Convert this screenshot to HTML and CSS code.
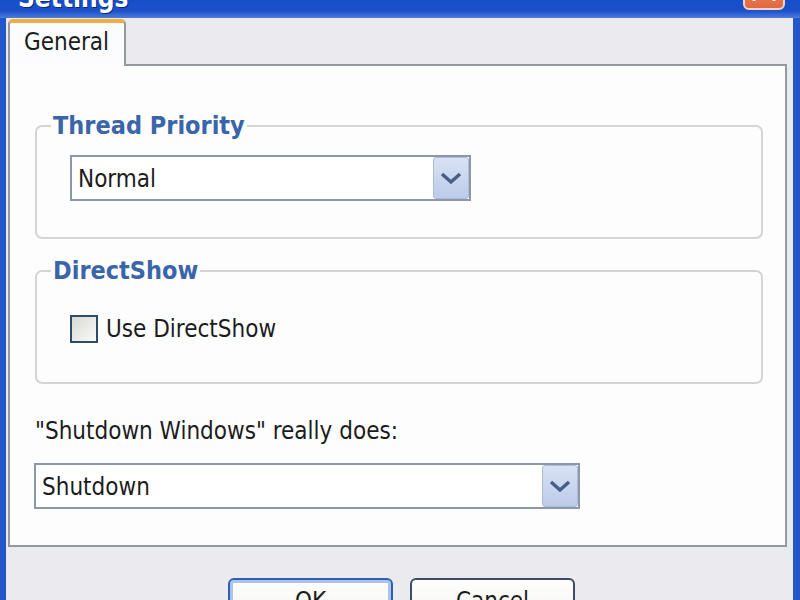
FILE: index.html
```html
<!DOCTYPE html>
<html lang="en">
<head>
    <meta charset="UTF-8">
    <title>Settings</title>
    <link rel="stylesheet" href="styles.css">
</head>
<body>
    <div class="titlebar">
        <span class="title">Settings</span>
        <span class="close">
            <svg width="38" height="38" viewBox="0 0 38 38">
                <path d="M9 9 L29 29 M29 9 L9 29" stroke="#fff" stroke-width="4" stroke-linecap="round"/>
            </svg>
        </span>
    </div>

    <div class="frame">
        <div class="tabs">
            <div class="tab active">General</div>
        </div>

        <div class="panel">
            <fieldset class="group group-priority">
                <legend>Thread Priority</legend>
                <div class="combo combo-short">
                    <span class="combo-text">Normal</span>
                    <span class="combo-btn">
                        <svg width="34" height="40" viewBox="0 0 34 40">
                            <path d="M8 16 L17 24 L26 16" fill="none" stroke="#4a5e84" stroke-width="3.5"/>
                        </svg>
                    </span>
                </div>
            </fieldset>

            <fieldset class="group group-ds">
                <legend>DirectShow</legend>
                <label class="check"><span class="box"></span>Use DirectShow</label>
            </fieldset>

            <div class="field-label">&quot;Shutdown Windows&quot; really does:</div>
            <div class="combo combo-wide">
                <span class="combo-text">Shutdown</span>
                <span class="combo-btn">
                    <svg width="34" height="40" viewBox="0 0 34 40">
                        <path d="M8 16 L17 24 L26 16" fill="none" stroke="#4a5e84" stroke-width="3.5"/>
                    </svg>
                </span>
            </div>
        </div>

        <div class="buttons">
            <button class="btn btn-default">OK</button>
            <button class="btn">Cancel</button>
        </div>
    </div>
</body>
</html>
```

FILE: styles.css
```css
html, body {
    margin: 0;
    height: 100%;
    overflow: hidden;
}
body {
    font-family: "DejaVu Sans Condensed", "DejaVu Sans", sans-serif;
    font-size: 24px;
    line-height: 28px;
    color: #1c1c1c;
    background: #ebeaef;
}

/* window caption, only its lower edge shows */
.titlebar {
    height: 60px;
    margin-top: -42px;
    display: flex;
    background: linear-gradient(#0b46d4, #1c50c8 88%, #4b7ddc);
}
.title {
    color: #fff;
    font-weight: bold;
    font-size: 26px;
    line-height: 30px;
    padding: 25px 0 0 18px;
    text-shadow: 1px 1px #0c2a7a;
}
.close {
    margin: 10px 15px 0 auto;
    width: 42px;
    height: 42px;
    box-sizing: border-box;
    border: 2px solid #f4d4c8;
    border-radius: 6px;
    background: linear-gradient(#f09a78, #e2683f);
}
.close svg {
    display: block;
}

.frame {
    height: 600px;
    border-left: 6px solid #2356c9;
    border-right: 7px solid #2356c9;
    padding: 1px 6px 0 2px;
}

/* tab strip */
.tabs {
    display: flex;
    height: 45px;
}
.tab {
    width: 118px;
    height: 47px;
    box-sizing: border-box;
    border: 2px solid #919b9c;
    border-top: 4px solid #f0ad42;
    border-bottom: none;
    border-radius: 5px 5px 0 0;
    background: #fcfcfe;
    padding: 5px 0 0 14px;
    position: relative;
    z-index: 1;
}

.panel {
    height: 483px;
    box-sizing: border-box;
    border: 2px solid #919b9c;
    background: #fdfdfe;
    padding: 45px 22px 0 25px;
}

/* group boxes */
.group {
    margin: 0;
    border: 2px solid #d4d4d8;
    border-radius: 7px;
    padding: 15px 0 36px 14px;
}
.group legend {
    padding: 0 2px;
    font-weight: bold;
    font-size: 25px;
    line-height: 29px;
    color: #3a65a8;
}
.group-ds {
    margin-top: 17px;
    padding: 30px 0 39px 14px;
}

/* combo boxes */
.combo {
    display: flex;
    align-items: center;
    height: 46px;
    box-sizing: border-box;
    border: 2px solid #8c98a8;
    background: #fff;
    padding: 0 0 0 6px;
}
.combo-short {
    width: 401px;
    margin-left: 19px;
}
.combo-wide {
    width: 546px;
    margin: 18px 0 0 -1px;
}
.combo-text {
    flex: 1;
    padding-top: 2px;
}
.combo-btn {
    width: 36px;
    height: 42px;
    box-sizing: border-box;
    border: 1px solid #aebbd6;
    border-radius: 3px;
    background: linear-gradient(#d8e2f5, #bccbea);
}
.combo-btn svg {
    display: block;
}

/* check box */
.check {
    display: flex;
    align-items: center;
    margin-left: 19px;
}
.box {
    width: 28px;
    height: 28px;
    box-sizing: border-box;
    border: 2px solid #2e4b68;
    background: linear-gradient(135deg, #d8d8d3, #fafaf8);
    margin-right: 8px;
}

.field-label {
    margin-top: 33px;
}

/* dialog buttons */
.buttons {
    display: flex;
    justify-content: center;
    gap: 17px;
    padding: 31px 0 0 8px;
}
.btn {
    width: 165px;
    height: 46px;
    font: inherit;
    color: #1c1c1c;
    border: 2px solid #3b4c66;
    border-radius: 6px;
    background: linear-gradient(#ffffff, #f4f4f0 80%, #dcdcd4);
}
.btn-default {
    border-color: #2f5fae;
    box-shadow: inset 0 0 0 3px #a9c4ee;
}
```
